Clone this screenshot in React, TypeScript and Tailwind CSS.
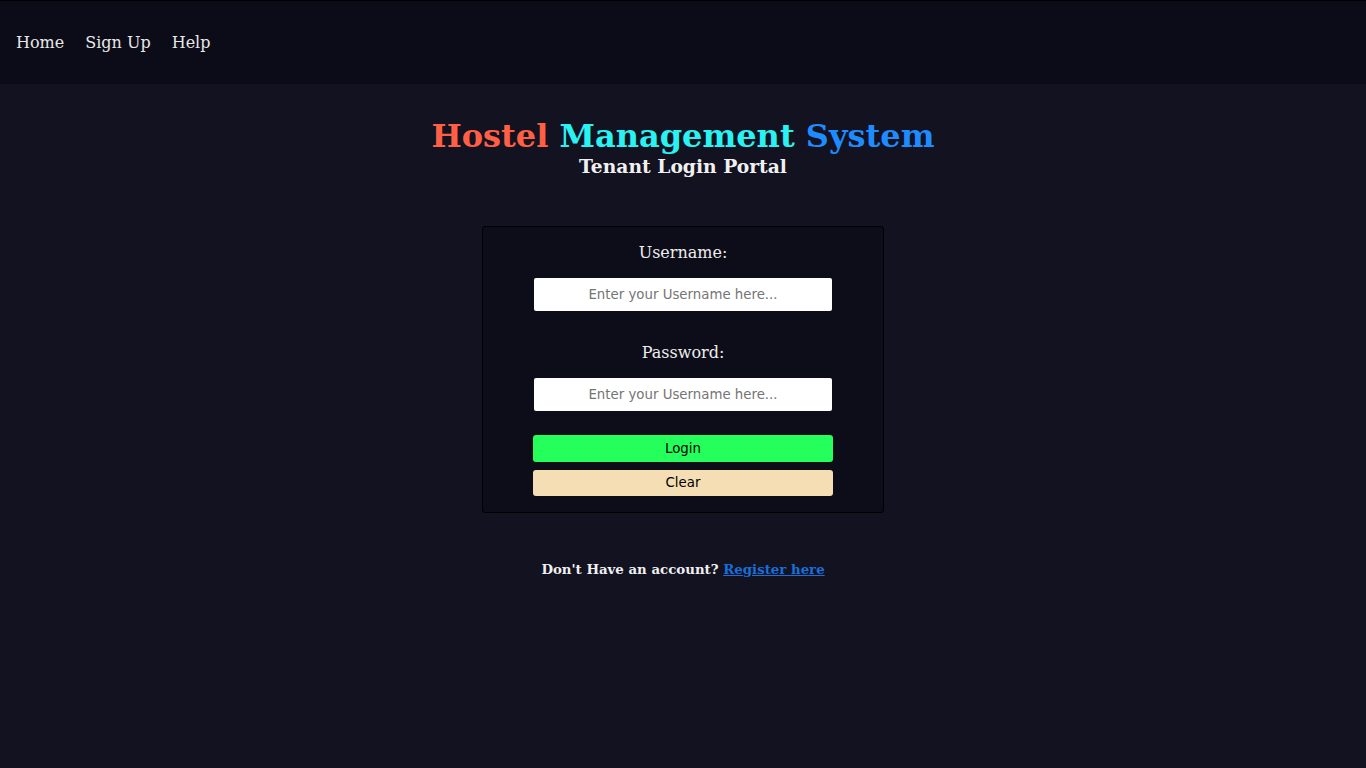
export default function App() {
  return (
    <div className="min-h-screen bg-[#121221] text-white" style={{ fontFamily: '"DejaVu Serif", serif' }}>
      {/* Navbar */}
      <nav className="h-[84px] bg-[#0c0c18] border-t border-black flex items-center gap-[21px] px-4 text-[16px] text-[#e8e8e8]">
        <a href="#">Home</a>
        <a href="#">Sign Up</a>
        <a href="#">Help</a>
      </nav>

      {/* Heading */}
      <div className="text-center pt-[33px]">
        <h1 className="text-[32px] font-bold leading-[38px]">
          <span className="text-[#ff5f45]">Hostel</span>{' '}
          <span className="text-[#2af2f2]">Management</span>{' '}
          <span className="text-[#1e8cff]">System</span>
        </h1>
        <h3 className="text-[18.72px] font-bold leading-[22px] text-[#f0f0f0]">Tenant Login Portal</h3>
      </div>

      {/* Login card */}
      <div className="w-[402px] mx-auto mt-[49px] bg-[#0d0d19] border border-black rounded-[3px] flex flex-col items-center pt-[14px] pb-[16px]">
        <label className="text-[16px] leading-[24px] text-[#eeeeee]">Username:</label>
        <input
          className="mt-[13px] w-[298px] h-[33px] bg-white rounded-[2px] text-center text-[13.33px] text-black placeholder:text-[#757575] outline-none"
          style={{ fontFamily: '"DejaVu Sans", sans-serif' }}
          placeholder="Enter your Username here..."
        />
        <label className="mt-[30px] text-[16px] leading-[24px] text-[#eeeeee]">Password:</label>
        <input
          type="password"
          className="mt-[13px] w-[298px] h-[33px] bg-white rounded-[2px] text-center text-[13.33px] text-black placeholder:text-[#757575] outline-none"
          style={{ fontFamily: '"DejaVu Sans", sans-serif' }}
          placeholder="Enter your Username here..."
        />
        <div className="mt-[24px] w-[300px] flex flex-col gap-[8px]" style={{ fontFamily: '"DejaVu Sans", sans-serif' }}>
          <button className="h-[27px] rounded-[3px] bg-[#24ff5c] text-black text-[13.33px]">Login</button>
          <button className="h-[26px] rounded-[3px] bg-[#f5deb3] text-black text-[13.33px]">Clear</button>
        </div>
      </div>

      {/* Footer link */}
      <p className="mt-[47px] text-center text-[13.33px] font-bold text-[#f0f0f0]">
        Don't Have an account?{' '}
        <a href="#" className="text-[#1a6ed8] underline">Register here</a>
      </p>
    </div>
  )
}
